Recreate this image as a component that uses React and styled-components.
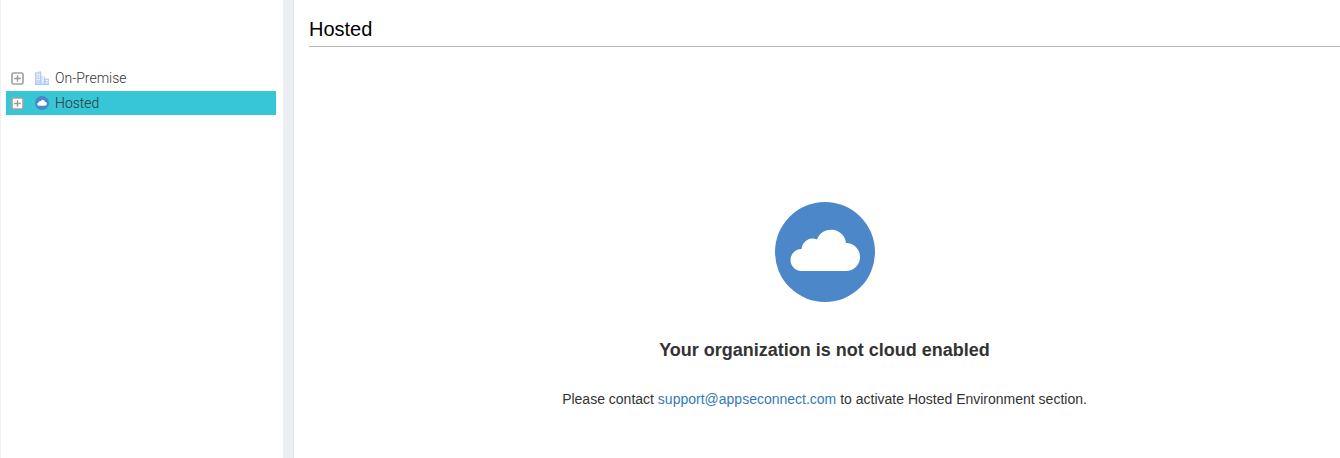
import React, { useState } from "react";
import styled, { createGlobalStyle } from "styled-components";

const GlobalStyle = createGlobalStyle`
  *, *::before, *::after { box-sizing: border-box; }
  body {
    margin: 0;
    background: #fff;
    color: #333;
    font: 14px/20px "Liberation Sans", Arial, sans-serif;
  }
`;

const Page = styled.div`
  display: flex;
  min-height: 100vh;
`;

const Sidebar = styled.nav`
  flex: 0 0 283px;
  border-left: 1px solid #edf1f4;
  padding: 66px 7px 0 5px;
`;

const Splitter = styled.div`
  flex: 0 0 11px;
  background: #ebeff2;
  border-right: 1px solid #e2e6ea;
`;

const Tree = styled.ul`
  list-style: none;
  margin: 0;
  padding: 0;
  display: flex;
  flex-direction: column;
  gap: 1px;
`;

const TreeRow = styled.li`
  display: flex;
  align-items: center;
  height: 24px;
  padding-left: 5px;
  background: ${({ $selected }) => ($selected ? "#36c6d6" : "transparent")};
`;

const ExpandButton = styled.button`
  display: flex;
  margin: 0 11px 0 0;
  padding: 0;
  border: 0;
  background: none;
  cursor: pointer;
`;

const NodeButton = styled.button`
  display: flex;
  align-items: center;
  gap: 6px;
  margin: 0;
  padding: 0;
  border: 0;
  background: none;
  color: #333;
  font: 300 14px/24px Roboto, "Open Sans", sans-serif;
  cursor: pointer;
`;

const Content = styled.main`
  flex: 1;
  min-width: 0;
  padding-left: 15px;
`;

const Title = styled.h1`
  margin: 0;
  padding: 17px 0 5px;
  border-bottom: 1px solid #b9b9b9;
  color: #000;
  font-size: 20px;
  font-weight: 400;
  line-height: 24px;
`;

const Notice = styled.section`
  display: flex;
  flex-direction: column;
  align-items: center;
  padding-top: 155px;
  text-align: center;
`;

const NoticeHeading = styled.h2`
  margin: 38px 0 29px;
  font-size: 18px;
  font-weight: 700;
  line-height: 20px;
`;

const NoticeText = styled.p`
  margin: 0;
`;

const MailLink = styled.a`
  color: #337ab7;
  text-decoration: none;
  &:hover { text-decoration: underline; }
`;

function PlusIcon() {
  return (
    <svg width="13" height="13" viewBox="0 0 13 13" aria-hidden="true">
      <rect x="1" y="1" width="11" height="11" rx="1.5" fill="#fff" stroke="#a3a3a3" strokeWidth="1.7" />
      <path d="M3.2 6.500h6.600M6.500 3.200v6.600" stroke="#999" strokeWidth="1.400" />
    </svg>
  );
}

function BuildingIcon() {
  return (
    <svg width="14" height="14" viewBox="0 0 14 14" aria-hidden="true">
      <path d="M0 1.5L6 0v14H0z" fill="#c3d9fb" />
      <path d="M6 5l4 .8V14H6z" fill="#d6e5fd" />
      <path d="M9.5 7.500h4.500V14H9.500z" fill="#b9d2fa" />
      <path d="M1.500 3.500h1.300M3.800 3.500h1.200M1.500 6h1.300M3.800 6h1.200M1.500 8.500h1.300M3.800 8.500h1.200M7 7.500h1.800M7 10h1.800M10.800 9.500h2M10.800 11.700h2" stroke="#fff" strokeWidth="1.100" />
      <path d="M.4 2v12M5.800 1v12.500M9.500 6v7.500M0 13.500h14" stroke="#a4c4f7" strokeWidth=".8" />
    </svg>
  );
}

function CloudIcon({ size }) {
  return (
    <svg width={size} height={size} viewBox="0 0 100 100" aria-hidden="true">
      <circle cx="50" cy="50" r="50" fill="#4b87c9" />
      <path
        fill="#fff"
        d="M26.500 69A11 11 0 0 1 26.500 47A11 11 0 0 1 42 37.500A15 15 0 0 1 71 41A14 14 0 0 1 71 69Z"
      />
    </svg>
  );
}

const NODES = [
  { name: "On-Premise", icon: <BuildingIcon /> },
  { name: "Hosted", icon: <CloudIcon size={14} /> },
];

export default function App() {
  const [selected, setSelected] = useState("Hosted");
  return (
    <>
      <GlobalStyle />
      <Page>
        <Sidebar aria-label="Environments">
          <Tree>
            {NODES.map(({ name, icon }) => (
              <TreeRow key={name} $selected={name === selected}>
                <ExpandButton type="button" aria-label={`Expand ${name}`}>
                  <PlusIcon />
                </ExpandButton>
                <NodeButton type="button" onClick={() => setSelected(name)}>
                  {icon}
                  {name}
                </NodeButton>
              </TreeRow>
            ))}
          </Tree>
        </Sidebar>
        <Splitter />
        <Content>
          <Title>Hosted</Title>
          <Notice>
            <CloudIcon size={100} />
            <NoticeHeading>Your organization is not cloud enabled</NoticeHeading>
            <NoticeText>
              Please contact{" "}
              <MailLink href="mailto:support@appseconnect.com">support@appseconnect.com</MailLink>{" "}
              to activate Hosted Environment section.
            </NoticeText>
          </Notice>
        </Content>
      </Page>
    </>
  );
}
